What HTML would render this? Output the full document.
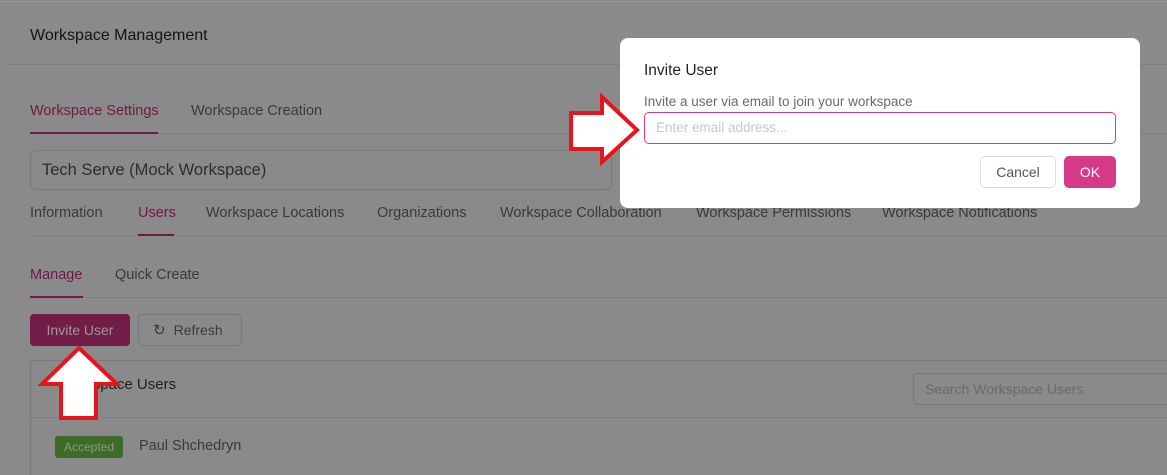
<html style="overflow:hidden"><head><style>
html,body{margin:0;width:1167px;height:475px;overflow:hidden}
body{background:#8a8a8a;font-family:"Liberation Sans",sans-serif;position:relative;color:#1f1f1f}
.a{position:absolute;white-space:nowrap}
.t{font-size:14.5px;color:#3a3a3a}
.p{color:#6e1a47}
.line{position:absolute;height:1px;background:#7f7f7f}
</style></head><body>
<div class="line" style="left:0;top:1px;width:1167px;background:#959595"></div>
<div class="a" style="left:30px;top:27px;font-size:16px;color:#141414">Workspace Management</div>
<div class="line" style="left:6px;top:64px;width:1161px"></div>
<div class="a t p" style="left:30px;top:103px">Workspace Settings</div>
<div class="a t" style="left:191px;top:103px">Workspace Creation</div>
<div class="line" style="left:30px;top:133px;width:1137px"></div>
<div class="a" style="left:30px;top:132px;width:128px;height:2px;background:#6e1a47"></div>
<div class="a" style="left:30px;top:150px;width:580px;height:38px;border:1px solid #7a7a7a;border-radius:6px"></div>
<div class="a" style="left:42px;top:161px;font-size:16.5px;color:#2d2d2d">Tech Serve (Mock Workspace)</div>
<div class="a t" style="left:30px;top:205px">Information</div>
<div class="a t p" style="left:138px;top:205px">Users</div>
<div class="a t" style="left:206px;top:205px">Workspace Locations</div>
<div class="a t" style="left:377px;top:205px">Organizations</div>
<div class="a t" style="left:500px;top:205px">Workspace Collaboration</div>
<div class="a t" style="left:696px;top:205px">Workspace Permissions</div>
<div class="a t" style="left:882px;top:205px">Workspace Notifications</div>
<div class="line" style="left:30px;top:235px;width:1137px"></div>
<div class="a" style="left:138px;top:234px;width:36px;height:2px;background:#6e1a47"></div>
<div class="a t p" style="left:30px;top:267px">Manage</div>
<div class="a t" style="left:115px;top:267px">Quick Create</div>
<div class="line" style="left:30px;top:297px;width:1137px"></div>
<div class="a" style="left:30px;top:296px;width:53px;height:2px;background:#6e1a47"></div>
<div class="a" style="left:30px;top:314px;width:100px;height:32px;background:#721c48;border-radius:4px;color:#9a9a9a;font-size:14px;line-height:32px;text-align:center">Invite User</div>
<div class="a" style="left:138px;top:314px;width:102px;height:30px;border:1px solid #7a7a7a;border-radius:4px;font-size:14px;line-height:30px;color:#3a3a3a"><span style="margin-left:14px;font-size:15px">↻</span><span style="margin-left:8px">Refresh</span></div>
<div class="a" style="left:30px;top:360px;width:1140px;height:130px;border:1px solid #7a7a7a;border-radius:4px"></div>
<div class="a" style="left:58px;top:376px;font-size:15px;color:#1f1f1f">Workspace Users</div>
<div class="a" style="left:913px;top:373px;width:260px;height:30px;border:1px solid #7a7a7a;border-radius:4px;font-size:14px;line-height:30px;color:#6a6a6a;text-indent:11px">Search Workspace Users</div>
<div class="line" style="left:31px;top:417px;width:1136px"></div>
<div class="a" style="left:55px;top:436px;width:68px;height:22px;background:#3f6b28;border-radius:3px;color:#8a9a7a;font-size:12px;line-height:22px;text-align:center">Accepted</div>
<div class="a t" style="left:139px;top:438px">Paul Shchedryn</div>
<div class="a" style="left:620px;top:38px;width:520px;height:170px;background:#fff;border-radius:8px"></div>
<div class="a" style="left:644px;top:62px;font-size:15.5px;color:#222">Invite User</div>
<div class="a" style="left:644px;top:94px;font-size:13.5px;color:#6a6a6a">Invite a user via email to join your workspace</div>
<div class="a" style="left:644px;top:112px;width:470px;height:30px;border:1px solid #d63a86;border-radius:5px;font-size:13.5px;line-height:30px;color:#c8c8c8;text-indent:11px">Enter email address...</div>
<div class="a" style="left:980px;top:156px;width:74px;height:30px;border:1px solid #ddd;border-radius:5px;font-size:14px;line-height:30px;text-align:center;color:#555">Cancel</div>
<div class="a" style="left:1064px;top:156px;width:52px;height:32px;background:#d63a86;border-radius:5px;font-size:14px;line-height:32px;text-align:center;color:#fff">OK</div>
<svg class="a" style="left:0;top:0" width="1167" height="475">
<polygon points="79,348 117,384 96,384 96,418 61,418 61,384 42,384" fill="#fff" stroke="#e8141c" stroke-width="4"/>
<polygon points="571,113 602,113 602,97 637,130 602,162 602,149 571,149" fill="#fff" stroke="#e8141c" stroke-width="4"/>
</svg>
</body></html>
